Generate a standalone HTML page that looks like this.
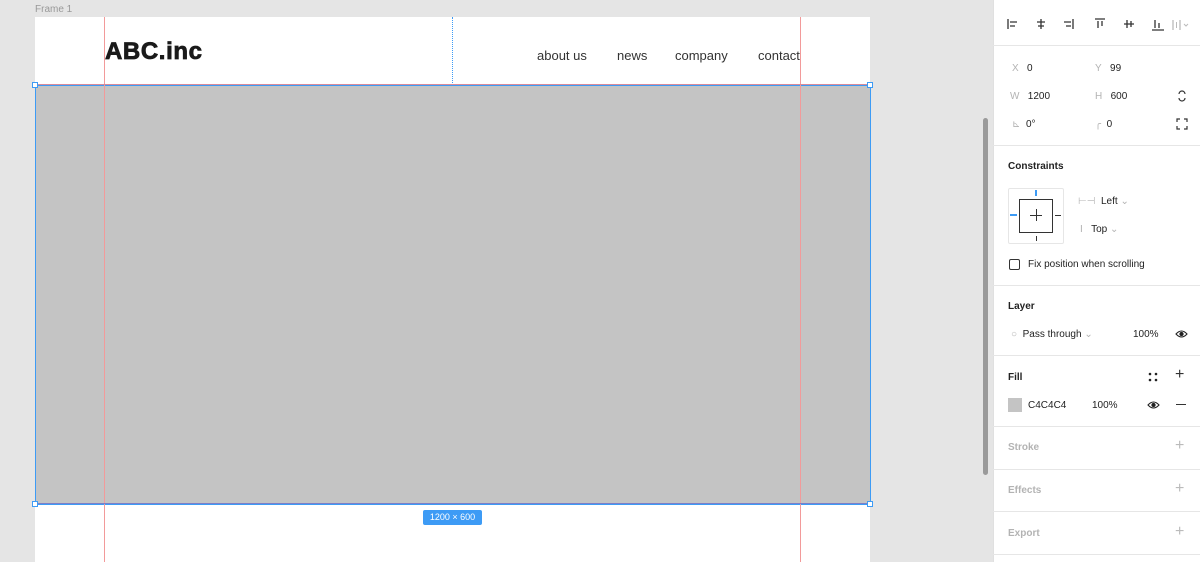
<!DOCTYPE html>
<html><head><meta charset="utf-8"><style>
*{margin:0;padding:0;box-sizing:border-box}
body{width:1200px;height:562px;overflow:hidden;background:#e5e5e5;position:relative;font-family:"Liberation Sans",sans-serif}
.a{position:absolute}
.p{font-size:10px;color:#222}
.g{color:#b3b3b3}
.h{font-size:10px;font-weight:bold;color:#222}
.sep{position:absolute;left:993px;width:207px;height:1px;background:#e6e6e6}
</style></head><body>
<div class="a" style="left:35px;top:4px;font-size:10px;color:#999">Frame 1</div>
<div class="a" style="left:35px;top:17px;width:835px;height:545px;background:#fff"></div>
<div class="a" style="left:105px;top:38px;font-size:24px;font-weight:bold;color:#1a1a1a;letter-spacing:0.6px;-webkit-text-stroke:0.8px #1a1a1a">ABC.inc</div>
<div class="a" style="left:537px;top:48px;font-size:13px;color:#333">about us</div>
<div class="a" style="left:617px;top:48px;font-size:13px;color:#333">news</div>
<div class="a" style="left:675px;top:48px;font-size:13px;color:#333">company</div>
<div class="a" style="left:758px;top:48px;font-size:13px;color:#333">contact</div>
<div class="a" style="left:452px;top:17px;height:66px;border-left:1px dotted #3d9bf5"></div>
<div class="a" style="left:35px;top:85px;width:836px;height:420px;background:#c4c4c4;border:1px solid #3d9bf5"></div>
<div class="a" style="left:104px;top:17px;width:1px;height:545px;background:#f29a9a"></div>
<div class="a" style="left:800px;top:17px;width:1px;height:545px;background:#f29a9a"></div>
<div class="a" style="left:36px;top:84px;width:834px;height:1px;background:#d98c9a"></div>
<div class="a" style="left:36px;top:503px;width:834px;height:1px;background:#7b7fc8"></div>
<div class="a" style="left:32px;top:82px;width:6px;height:6px;background:#fff;border:1px solid #3d9bf5"></div>
<div class="a" style="left:867px;top:82px;width:6px;height:6px;background:#fff;border:1px solid #3d9bf5"></div>
<div class="a" style="left:32px;top:501px;width:6px;height:6px;background:#fff;border:1px solid #3d9bf5"></div>
<div class="a" style="left:867px;top:501px;width:6px;height:6px;background:#fff;border:1px solid #3d9bf5"></div>
<div class="a" style="left:423px;top:510px;width:59px;height:15px;background:#3d9bf5;border-radius:2px;color:#fff;font-size:9px;text-align:center;line-height:15px">1200 × 600</div>
<div class="a" style="left:983px;top:118px;width:5px;height:357px;background:#9a9a9a;border-radius:3px"></div>
<div class="a" style="left:993px;top:0;width:207px;height:562px;background:#fff;border-left:1px solid #e0e0e0"></div>
<svg class="a" style="left:1005px;top:16px" width="190" height="18" fill="none" stroke="#333" stroke-width="1.3">
<path d="M3 3v10M5 6h7M5 10h5"/>
<path d="M36 3v10M32 6h8M33 10h6"/>
<path d="M68 3v10M59 6h7M61 10h5"/>
<path d="M90 3h10M93 5v7M97 5v5"/>
<path d="M119 8h10M122 4v8M126 5v6"/>
<path d="M147 14h12M150 4v8M154 7v5" />
<path d="M168 4v10M175 4v10" stroke="#bbb"/><path d="M171.5 6v6M179 8l2 2 2-2" stroke="#bbb" stroke-width="1"/>
</svg>
<div class="sep" style="top:45px"></div>
<div class="a p" style="left:1012px;top:63px"><span class="g">X</span>&nbsp;&nbsp;&nbsp;0</div>
<div class="a p" style="left:1095px;top:63px"><span class="g">Y</span>&nbsp;&nbsp;&nbsp;99</div>
<div class="a p" style="left:1010px;top:91px"><span class="g">W</span>&nbsp;&nbsp;&nbsp;1200</div>
<div class="a p" style="left:1095px;top:91px"><span class="g">H</span>&nbsp;&nbsp;&nbsp;600</div>
<svg class="a" style="left:1176px;top:89px" width="12" height="14" fill="none" stroke="#333" stroke-width="1.2"><path d="M3 5a3 3 0 0 1 6 0M3 9a3 3 0 0 0 6 0"/></svg>
<div class="a p" style="left:1012px;top:119px"><span class="g">⊾</span>&nbsp;&nbsp;0°</div>
<div class="a p" style="left:1095px;top:119px"><span class="g">╭</span>&nbsp;&nbsp;0</div>
<svg class="a" style="left:1176px;top:118px" width="12" height="12" fill="none" stroke="#333" stroke-width="1.2"><path d="M1 4V1h3M8 1h3v3M11 8v3H8M4 11H1V8"/></svg>
<div class="sep" style="top:145px"></div>
<div class="a h" style="left:1008px;top:161px">Constraints</div>
<div class="a" style="left:1008px;top:188px;width:56px;height:56px;border:1px solid #e6e6e6;border-radius:2px"></div>
<div class="a" style="left:1019px;top:199px;width:34px;height:34px;border:1px solid #333"></div>
<div class="a" style="left:1030px;top:215px;width:12px;height:1px;background:#333"></div>
<div class="a" style="left:1036px;top:209px;width:1px;height:12px;background:#333"></div>
<div class="a" style="left:1035px;top:190px;width:2px;height:6px;background:#3d9bf5"></div>
<div class="a" style="left:1010px;top:214px;width:7px;height:2px;background:#3d9bf5"></div>
<div class="a" style="left:1055px;top:215px;width:6px;height:1px;background:#333"></div>
<div class="a" style="left:1036px;top:236px;width:1px;height:5px;background:#333"></div>
<div class="a p" style="left:1078px;top:196px"><span class="g">⊢⊣</span>&nbsp;&nbsp;Left <span class="g">⌄</span></div>
<div class="a p" style="left:1080px;top:224px"><span class="g">I</span>&nbsp;&nbsp;&nbsp;Top <span class="g">⌄</span></div>
<div class="a" style="left:1009px;top:259px;width:11px;height:11px;border:1px solid #333;border-radius:2px"></div>
<div class="a p" style="left:1028px;top:259px">Fix position when scrolling</div>
<div class="sep" style="top:285px"></div>
<div class="a h" style="left:1008px;top:301px">Layer</div>
<div class="a p" style="left:1011px;top:329px"><span class="g">○</span>&nbsp;&nbsp;Pass through <span class="g">⌄</span></div>
<div class="a p" style="left:1133px;top:329px">100%</div>
<svg class="a" style="left:1175px;top:329px" width="13" height="10" fill="none" stroke="#222" stroke-width="1.1"><path d="M1 5q5.5-6 11 0q-5.5 6-11 0z"/><circle cx="6.5" cy="5" r="1.6" fill="#222"/></svg>
<div class="sep" style="top:355px"></div>
<div class="a h" style="left:1008px;top:372px">Fill</div>
<svg class="a" style="left:1148px;top:372px" width="10" height="10" fill="#222"><circle cx="2" cy="2" r="1.3"/><circle cx="8" cy="2" r="1.3"/><circle cx="2" cy="8" r="1.3"/><circle cx="8" cy="8" r="1.3"/></svg>
<div class="a" style="left:1175px;top:366px;font-size:16px;color:#333">+</div>
<div class="a" style="left:1008px;top:398px;width:14px;height:14px;background:#c4c4c4"></div>
<div class="a p" style="left:1028px;top:400px">C4C4C4</div>
<div class="a p" style="left:1092px;top:400px">100%</div>
<svg class="a" style="left:1147px;top:400px" width="13" height="10" fill="none" stroke="#222" stroke-width="1.1"><path d="M1 5q5.5-6 11 0q-5.5 6-11 0z"/><circle cx="6.5" cy="5" r="1.6" fill="#222"/></svg>
<div class="a" style="left:1176px;top:404px;width:10px;height:1px;background:#333"></div>
<div class="sep" style="top:426px"></div>
<div class="a h g" style="left:1008px;top:442px;color:#b3b3b3">Stroke</div>
<div class="a" style="left:1175px;top:437px;font-size:16px;color:#bbb">+</div>
<div class="sep" style="top:469px"></div>
<div class="a h" style="left:1008px;top:485px;color:#b3b3b3">Effects</div>
<div class="a" style="left:1175px;top:480px;font-size:16px;color:#bbb">+</div>
<div class="sep" style="top:511px"></div>
<div class="a h" style="left:1008px;top:528px;color:#b3b3b3">Export</div>
<div class="a" style="left:1175px;top:523px;font-size:16px;color:#bbb">+</div>
<div class="sep" style="top:554px"></div>
</body></html>
